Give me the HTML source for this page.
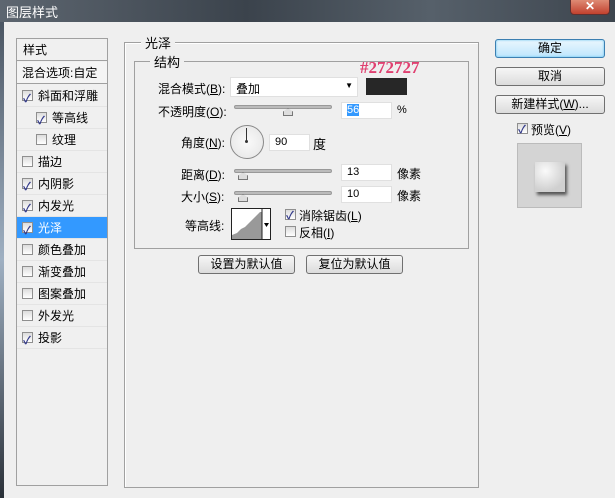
<!DOCTYPE html>
<html><head><meta charset="utf-8"><style>
*{margin:0;padding:0;box-sizing:border-box}
body{width:615px;height:498px;overflow:hidden;background:#efefef;font-family:"Liberation Sans","Noto Sans CJK SC",sans-serif;font-size:12px;color:#000;position:relative}
.a{position:absolute}
.title{left:0;top:0;width:615px;height:22px;background:linear-gradient(90deg,#5d6670,#3b434c 40%,#56606a 70%,#3d454e);color:#fff}
.cb{width:11px;height:11px;border:1px solid #8f8f8f;background:linear-gradient(#dcdcdc,#fff)}
.ck::after{content:"✓";position:absolute;left:0;top:-3px;font-size:11px;color:#333a8a;font-weight:bold}
.row{left:17px;width:90px;height:22px;line-height:22px;border-bottom:1px solid #e4e4e4}
.row .cb{position:absolute;left:5px;top:5px}
.row span{position:absolute;left:21px}
.inp{background:#fff;border:1px solid #e0e0e0;height:17px;line-height:15px;padding-left:5px;font-size:11px}
.trk{height:4px;background:#bbb;border:1px solid #999;border-radius:2px}
.thumb{width:10px;height:8px;background:#ddd;border:1px solid #777;clip-path:polygon(50% 0,100% 45%,100% 100%,0 100%,0 45%)}
.btn{border:1px solid #707070;border-radius:3px;background:linear-gradient(#f6f6f6,#dcdcdc);text-align:center;line-height:16px;height:19px}
</style></head><body>
<div class="a title"><span class="a" style="left:6px;top:2px;font-size:13px">图层样式</span>
<div class="a" style="left:570px;top:-2px;width:40px;height:17px;background:linear-gradient(#e0907a,#c2412e);border:1px solid #603030;border-radius:0 0 4px 4px;color:#fff;text-align:center;font-size:12px;line-height:15px;font-weight:bold">✕</div></div>
<div class="a" style="left:0;top:22px;width:4px;height:476px;background:linear-gradient(#4b5663,#9fb0c2 50%,#2a3038)"></div>

<div class="a" style="left:16px;top:38px;width:92px;height:448px;border:1px solid #a0a0a0;background:#f0f0f0"></div>
<div class="a row" style="top:39px;height:22px;border-bottom:1px solid #a0a0a0"><span style="left:6px">样式</span></div>
<div class="a row" style="top:62px;border-bottom:1px solid #a0a0a0;background:#f4f4f4"><span style="left:5px">混合选项:自定</span></div>
<div class="a row" style="top:85px"><div class="cb ck a"></div><span>斜面和浮雕</span></div>
<div class="a row" style="top:107px"><div class="cb ck a" style="left:19px"></div><span style="left:35px">等高线</span></div>
<div class="a row" style="top:129px"><div class="cb a" style="left:19px"></div><span style="left:35px">纹理</span></div>
<div class="a row" style="top:151px"><div class="cb a"></div><span>描边</span></div>
<div class="a row" style="top:173px"><div class="cb ck a"></div><span>内阴影</span></div>
<div class="a row" style="top:195px"><div class="cb ck a"></div><span>内发光</span></div>
<div class="a row" style="top:217px;background:#3399ff;color:#fff"><div class="cb ck a"></div><span>光泽</span></div>
<div class="a row" style="top:239px"><div class="cb a"></div><span>颜色叠加</span></div>
<div class="a row" style="top:261px"><div class="cb a"></div><span>渐变叠加</span></div>
<div class="a row" style="top:283px"><div class="cb a"></div><span>图案叠加</span></div>
<div class="a row" style="top:305px"><div class="cb a"></div><span>外发光</span></div>
<div class="a row" style="top:327px"><div class="cb ck a"></div><span>投影</span></div>

<div class="a" style="left:124px;top:42px;width:355px;height:446px;border:1px solid #a0a0a0;box-shadow:1px 1px 0 #fff inset"></div>
<div class="a" style="left:141px;top:33px;background:#efefef;padding:0 4px;font-size:13px">光泽</div>
<div class="a" style="left:134px;top:61px;width:335px;height:188px;border:1px solid #a0a0a0"></div>
<div class="a" style="left:150px;top:52px;background:#efefef;padding:0 4px;font-size:13px">结构</div>
<div class="a" style="left:360px;top:58px;color:#e04070;font-family:'Liberation Serif',serif;font-size:17px;font-weight:bold">#272727</div>

<div class="a" style="left:158px;top:80px">混合模式(<u>B</u>):</div>
<div class="a" style="left:230px;top:77px;width:128px;height:20px;background:#fff;border:1px solid #e0e0e0;padding:2px 5px">叠加<span class="a" style="right:4px;top:3px;font-size:8px">▼</span></div>
<div class="a" style="left:366px;top:78px;width:41px;height:17px;background:#272727"></div>

<div class="a" style="left:158px;top:103px">不透明度(<u>O</u>):</div>
<div class="a trk" style="left:234px;top:105px;width:98px"></div>
<div class="a thumb" style="left:283px;top:108px"></div>
<div class="a inp" style="left:341px;top:102px;width:51px"><span style="background:#3399ff;color:#fff">56</span></div>
<div class="a" style="left:397px;top:104px;font-size:11px">%</div>

<div class="a" style="left:181px;top:134px">角度(<u>N</u>):</div>
<div class="a" style="left:230px;top:125px;width:34px;height:34px;border-radius:50%;border:1px solid #888;background:radial-gradient(#fafafa,#e4e4e4)"></div>
<div class="a" style="left:246px;top:128px;width:1px;height:14px;background:#333"></div>
<div class="a" style="left:245px;top:140px;width:3px;height:3px;background:#333;border-radius:50%"></div>
<div class="a inp" style="left:269px;top:134px;width:41px">90</div>
<div class="a" style="left:313px;top:134px;font-size:13px">度</div>

<div class="a" style="left:181px;top:166px">距离(<u>D</u>):</div>
<div class="a trk" style="left:234px;top:169px;width:98px"></div>
<div class="a thumb" style="left:238px;top:172px"></div>
<div class="a inp" style="left:341px;top:164px;width:51px">13</div>
<div class="a" style="left:397px;top:165px">像素</div>

<div class="a" style="left:181px;top:188px">大小(<u>S</u>):</div>
<div class="a trk" style="left:234px;top:191px;width:98px"></div>
<div class="a thumb" style="left:238px;top:194px"></div>
<div class="a inp" style="left:341px;top:186px;width:51px">10</div>
<div class="a" style="left:397px;top:187px">像素</div>

<div class="a" style="left:185px;top:217px">等高线:</div>
<div class="a" style="left:231px;top:208px;width:40px;height:32px;border:1px solid #222;background:#fff;overflow:hidden">
<svg width="40" height="32" style="position:absolute;left:0;top:0"><path d="M0 32 L0 26 L5 24 L9 20 L13 18 L17 14 L21 10 L25 6 L28 3 L30 3 L30 32Z" fill="#999"/><line x1="30" y1="0" x2="30" y2="32" stroke="#222"/><path d="M32 14 L37 14 L34.5 18Z" fill="#000"/></svg></div>
<div class="a cb ck" style="left:285px;top:209px"></div>
<div class="a" style="left:299px;top:207px">消除锯齿(<u>L</u>)</div>
<div class="a cb" style="left:285px;top:226px"></div>
<div class="a" style="left:299px;top:224px">反相(<u>I</u>)</div>

<div class="a btn" style="left:198px;top:255px;width:97px">设置为默认值</div>
<div class="a btn" style="left:306px;top:255px;width:97px">复位为默认值</div>

<div class="a btn" style="left:495px;top:39px;width:110px;border-color:#3c7fb1;box-shadow:0 0 2px #5cc0f0 inset;background:linear-gradient(#eaf6fd,#bee6fd)">确定</div>
<div class="a btn" style="left:495px;top:67px;width:110px">取消</div>
<div class="a btn" style="left:495px;top:95px;width:110px">新建样式(<u>W</u>)...</div>
<div class="a cb ck" style="left:517px;top:123px"></div>
<div class="a" style="left:531px;top:121px">预览(<u>V</u>)</div>
<div class="a" style="left:517px;top:143px;width:65px;height:65px;background:#d4d4d4;border:1px solid #bbb"></div>
<div class="a" style="left:535px;top:162px;width:30px;height:30px;background:radial-gradient(circle at 35% 30%,#fafafa,#d0d0d0 70%);box-shadow:2px 3px 3px #555"></div>
</body></html>
